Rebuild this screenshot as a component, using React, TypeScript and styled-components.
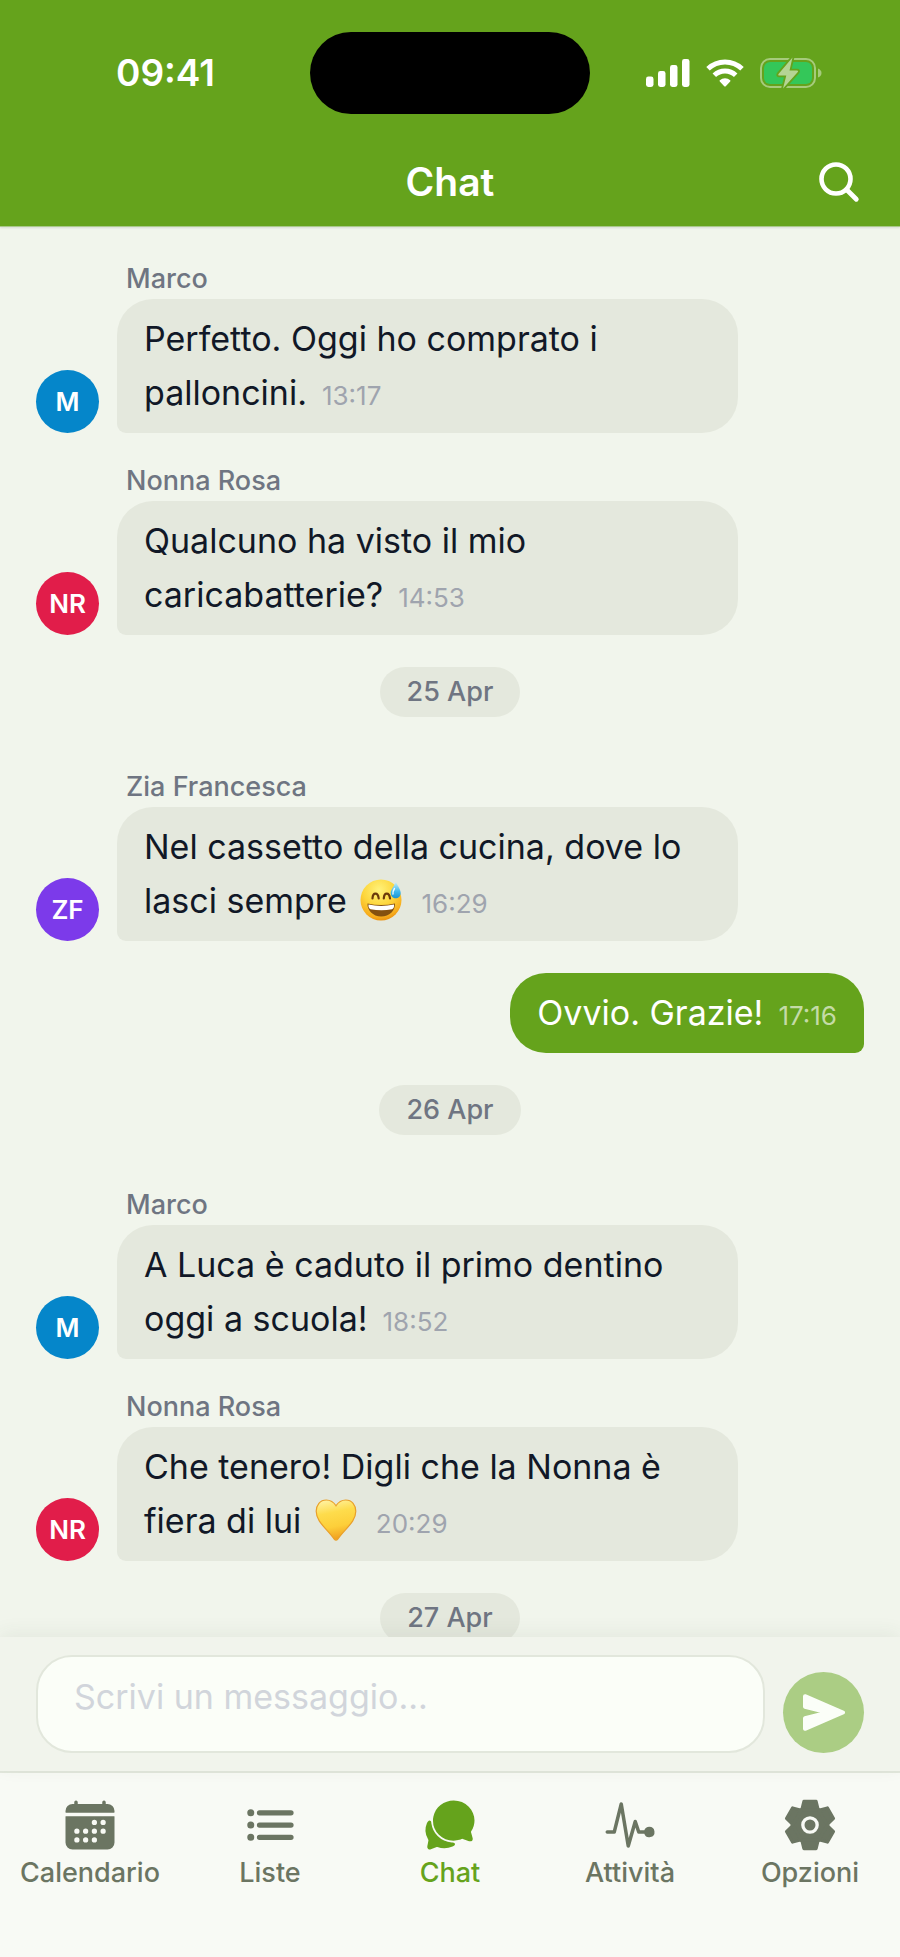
import React from "react";
import styled, { createGlobalStyle } from "styled-components";
import { IoCalendar, IoChatbubbles, IoList, IoPulse } from "react-icons/io5";

const color = {
  green: "#65a31c",
  page: "#f1f5ec",
  composer: "#f1f4ec",
  bubble: "#e4e8dd",
  nav: "#f8faf5",
  ink: "#111827",
  muted: "#6f7582",
  faint: "#9fa4ae",
  tab: "#6b7562",
};

const GlobalStyle = createGlobalStyle`
  *, *::before, *::after { box-sizing: border-box; }
  body {
    margin: 0;
    background: ${color.page};
    color: ${color.ink};
    font-family: Inter, "Liberation Sans", sans-serif;
  }
  button, textarea { font: inherit; border: 0; padding: 0; margin: 0; }
`;

const Screen = styled.div`
  display: flex;
  flex-direction: column;
  height: 100vh;
`;

const Header = styled.header`
  position: relative;
  z-index: 1;
  flex: none;
  background: ${color.green};
  border-bottom: 1px solid #a9c98a;
  box-shadow: 0 1px 2px rgba(0, 0, 0, 0.1);
`;

const StatusBar = styled.div`
  display: grid;
  grid-template-columns: 1fr 280px 1fr;
  align-items: center;
  height: 146px;
`;

const Clock = styled.time`
  padding-left: 116px;
  color: #fff;
  font-size: 37px;
  line-height: 44px;
  font-weight: 600;
`;

const Island = styled.div`
  height: 82px;
  border-radius: 41px;
  background: #000;
`;

const StatusIcons = styled.div`
  display: flex;
  align-items: center;
  justify-content: flex-end;
  gap: 16px;
  padding-right: 78px;

  svg {
    display: block;
  }
`;

const TitleBar = styled.div`
  display: grid;
  grid-template-columns: 1fr auto 1fr;
  align-items: center;
  height: 80px;
  padding: 0 40px 8px;
`;

const Title = styled.h1`
  grid-column: 2;
  margin: 0;
  color: #fff;
  font-size: 39px;
  line-height: 48px;
  font-weight: 600;
`;

const SearchButton = styled.button`
  justify-self: end;
  width: 42px;
  height: 42px;
  background: none;
  color: #fff;

  svg {
    display: block;
  }
`;

const Messages = styled.main`
  flex: 1;
  min-height: 0;
  overflow-y: auto;
  scrollbar-width: none;
  display: flex;
  flex-direction: column;
  gap: 32px;
  padding: 36px;
`;

const Row = styled.article<{ $own?: boolean }>`
  flex: none;
  display: flex;
  align-items: flex-end;
  justify-content: ${(p) => (p.$own ? "flex-end" : "flex-start")};
  gap: 18px;
`;

const Avatar = styled.div<{ $tone: string }>`
  flex: none;
  display: grid;
  place-items: center;
  width: 63px;
  height: 63px;
  border-radius: 50%;
  background: ${(p) => p.$tone};
  color: #fff;
  font-size: 26px;
  font-weight: 600;
`;

const Column = styled.div`
  max-width: 75%;
`;

const Sender = styled.div`
  height: 36px;
  padding-left: 9px;
  color: ${color.muted};
  font-size: 27px;
  line-height: 32px;
  font-weight: 500;
`;

const Bubble = styled.p<{ $own?: boolean }>`
  margin: 0;
  padding: 13px 27px;
  border-radius: ${(p) => (p.$own ? "36px 36px 9px 36px" : "36px 36px 36px 9px")};
  background: ${(p) => (p.$own ? color.green : color.bubble)};
  color: ${(p) => (p.$own ? "#fff" : color.ink)};
  font-size: 34px;
  line-height: 54px;
`;

const Sent = styled.time<{ $own?: boolean }>`
  margin-left: 15px;
  color: ${(p) => (p.$own ? "#c4dba7" : color.faint)};
  font-size: 26px;
  line-height: 32px;
`;

const EmojiArt = styled.svg`
  width: 42px;
  height: 42px;
  margin: 0 4px;
  vertical-align: -8px;
`;

const Day = styled.div`
  flex: none;
  align-self: center;
  height: 50px;
  margin-bottom: 22px;
  padding: 0 27px;
  border-radius: 25px;
  background: ${color.bubble};
  color: ${color.muted};
  font-size: 27px;
  line-height: 50px;
  font-weight: 500;

  &:last-child {
    margin-bottom: 0;
  }
`;

const Composer = styled.form`
  position: relative;
  flex: none;
  display: flex;
  align-items: flex-end;
  gap: 18px;
  padding: 18px 36px;
  background: ${color.composer};
  box-shadow: 0 -4px 18px rgba(60, 70, 50, 0.07);
`;

const Field = styled.textarea`
  flex: 1;
  min-width: 0;
  height: 98px;
  && {
    padding: 13px 36px;
    border: 2px solid #e2e7dc;
  }
  border-radius: 36px;
  outline: 0;
  resize: none;
  overflow: hidden;
  background: #fbfef8;
  color: ${color.ink};
  && {
    font-size: 34px;
    line-height: 54px;
  }

  &::placeholder {
    color: #d1d5db;
    opacity: 1;
  }
`;

const SendButton = styled.button`
  flex: none;
  display: grid;
  place-items: center;
  width: 81px;
  height: 81px;
  border-radius: 50%;
  background: #abcd84;
  color: #fbfef8;
`;

const TabBar = styled.nav`
  flex: none;
  display: grid;
  grid-template-columns: repeat(5, 1fr);
  padding: 24px 0 68px;
  border-top: 2px solid #e2e7dc;
  background: ${color.nav};
`;

const Tab = styled.a<{ $active?: boolean }>`
  display: flex;
  flex-direction: column;
  align-items: center;
  gap: 4px;
  color: ${(p) => (p.$active ? color.green : color.tab)};
  font-size: 27px;
  line-height: 32px;
  font-weight: 500;
  text-decoration: none;
`;

const SignalIcon = () => (
  <svg width="44" height="28" viewBox="0 0 44 28" fill="#fff" aria-hidden="true">
    <rect x="0" y="17.5" width="7.5" height="10.5" rx="2.4" />
    <rect x="12" y="12" width="7.5" height="16" rx="2.4" />
    <rect x="24" y="6" width="7.5" height="22" rx="2.4" />
    <rect x="36" y="0" width="7.5" height="28" rx="2.4" />
  </svg>
);

const WifiIcon = () => (
  <svg width="38" height="28" viewBox="0 0 38 28" aria-hidden="true">
    <g fill="none" stroke="#fff" strokeWidth="5">
      <path d="M2 9.7a24.6 24.6 0 0 1 34 0" />
      <path d="M8.3 16.2a15.4 15.4 0 0 1 21.4 0" />
    </g>
    <path d="M13.8 21.3a7.6 7.6 0 0 1 10.4 0q.6.6 0 1.2L20 27q-1 1-2 0l-4.2-4.5q-.6-.6 0-1.2z" fill="#fff" />
  </svg>
);

const BatteryIcon = () => (
  <svg width="62" height="32" viewBox="0 0 62 32" aria-hidden="true">
    <rect x="1" y="2" width="54" height="28" rx="9" fill="none" stroke="#a6cb7c" strokeWidth="2" />
    <path d="M58 11.5q3.500 1.500 3.500 4.500t-3.500 4.500z" fill="#a6cb7c" />
    <rect x="4" y="5" width="48" height="22" rx="6" fill="#34c759" />
    <path
      d="M32.500 0.500 18.500 17q-1 1.500.8 1.500h7L23 31.500 37.800 15q1-1.500-.8-1.500h-7.500z"
      fill="#b5d494"
      stroke={color.green}
      strokeWidth="3.600"
      strokeLinejoin="round"
      paintOrder="stroke"
    />
  </svg>
);

const SearchIcon = () => (
  <svg width="42" height="42" viewBox="0 0 42 42" fill="none" stroke="currentColor" aria-hidden="true">
    <circle cx="18" cy="18" r="14.5" strokeWidth="4.6" />
    <path d="m28.5 28.5 9.8 9.8" strokeWidth="4.8" strokeLinecap="round" />
  </svg>
);

const SendIcon = () => (
  <svg width="42" height="37" viewBox="0 0 42 37" fill="currentColor" aria-hidden="true">
    <path
      d="M2 2.200 40 18.500 2 34.800V24.200l23-5.700L2 12.800z"
      stroke="currentColor"
      strokeWidth="4"
      strokeLinejoin="round"
    />
  </svg>
);

const GearIcon = () => (
  <svg width="56" height="56" viewBox="-84 -84 168 168" fill="currentColor" aria-hidden="true">
    <mask id="gear-ring">
      <rect x="-84" y="-84" width="168" height="168" fill="#fff" />
      <circle r="21.5" fill="none" stroke="#000" strokeWidth="10" />
    </mask>
    <g mask="url(#gear-ring)">
      <circle r="58" />
      {[0, 60, 120, 180, 240, 300].map((angle) => (
        <path
          key={angle}
          d="M-25 -45-18.500-71h37L25-45z"
          stroke="currentColor"
          strokeWidth="9"
          strokeLinejoin="round"
          transform={`rotate(${angle})`}
        />
      ))}
    </g>
  </svg>
);

const GrinSweat = () => (
  <EmojiArt viewBox="0 0 42 42" role="img" aria-label="😅">
    <defs>
      <radialGradient id="face" cx="45%" cy="25%" r="78%">
        <stop offset="0" stopColor="#fff27a" />
        <stop offset="0.5" stopColor="#fdd63c" />
        <stop offset="0.85" stopColor="#f7ac1c" />
        <stop offset="1" stopColor="#e88a0c" />
      </radialGradient>
      <linearGradient id="drop" x1="0" y1="0" x2="0" y2="1">
        <stop offset="0" stopColor="#c9f0fd" />
        <stop offset="0.6" stopColor="#3db7ec" />
        <stop offset="1" stopColor="#1a93d3" />
      </linearGradient>
    </defs>
    <circle cx="21" cy="21" r="20.5" fill="url(#face)" />
    <path
      d="M12.500 19.500c.3-6.500 5.500-6.500 6.200 0M23.800 19.500c.3-6.500 5.500-6.500 6.200 0"
      fill="none"
      stroke="#6b3a0a"
      strokeWidth="2.2"
      strokeLinecap="round"
    />
    <path d="M7.500 24.500q13.500 3.200 27.500 0c.3 7-5.500 13-13.800 13S7 31 7.500 24.500z" fill="#85500f" />
    <path d="M8.500 25.500q12.500 2.800 25.500 0 .5 3.500-2 4.800-10.500 2-21.500 0-2.400-1.200-2-4.800z" fill="#fff" />
    <path d="M36 3c-2.500 4.500-5.300 8-5.300 11 0 7 10 7 10 0 0-3.200-2.700-6.500-4.700-11z" fill="url(#drop)" />
    <path d="M34.500 9.500q-2 3-1.500 5.500" stroke="#f2fcff" strokeWidth="1.4" strokeLinecap="round" fill="none" />
  </EmojiArt>
);

const YellowHeart = () => (
  <EmojiArt viewBox="0 0 42 42" role="img" aria-label="💛">
    <defs>
      <linearGradient id="heart" x1="0.4" y1="0" x2="0.6" y2="1">
        <stop offset="0" stopColor="#fff09a" />
        <stop offset="0.3" stopColor="#fedc4c" />
        <stop offset="0.65" stopColor="#fdcf3a" />
        <stop offset="1" stopColor="#ef9a1c" />
      </linearGradient>
    </defs>
    <path
      d="M21 6.800C18.500 2.800 15 1 11.300 1 5 1 1.200 6 1.200 12.300c0 10.700 10.500 17 18 27.800q1.800 2 3.600 0c7.500-10.800 18-17.100 18-27.800C40.800 6 37 1 30.700 1 27 1 23.500 2.800 21 6.800z"
      fill="url(#heart)"
      stroke="#e9a02a"
      strokeWidth="1.2"
    />
  </EmojiArt>
);

type Person = { name: string; initials: string; tone: string };

const marco: Person = { name: "Marco", initials: "M", tone: "#0586ca" };
const rosa: Person = { name: "Nonna Rosa", initials: "NR", tone: "#e11d4a" };
const zia: Person = { name: "Zia Francesca", initials: "ZF", tone: "#7c3aea" };

type Entry =
  | { kind: "day"; label: string }
  | { kind: "message"; from?: Person; body: React.ReactNode; time: string };

const entries: Entry[] = [
  { kind: "message", from: marco, body: "Perfetto. Oggi ho comprato i palloncini.", time: "13:17" },
  { kind: "message", from: rosa, body: "Qualcuno ha visto il mio caricabatterie?", time: "14:53" },
  { kind: "day", label: "25 Apr" },
  {
    kind: "message",
    from: zia,
    body: <>Nel cassetto della cucina, dove lo lasci sempre <GrinSweat /></>,
    time: "16:29",
  },
  { kind: "message", body: "Ovvio. Grazie!", time: "17:16" },
  { kind: "day", label: "26 Apr" },
  { kind: "message", from: marco, body: "A Luca è caduto il primo dentino oggi a scuola!", time: "18:52" },
  {
    kind: "message",
    from: rosa,
    body: <>Che tenero! Digli che la Nonna è fiera di lui <YellowHeart /></>,
    time: "20:29",
  },
  { kind: "day", label: "27 Apr" },
];

const tabs = [
  { label: "Calendario", icon: <IoCalendar size={56} aria-hidden="true" /> },
  { label: "Liste", icon: <IoList size={56} aria-hidden="true" /> },
  { label: "Chat", icon: <IoChatbubbles size={56} aria-hidden="true" />, active: true },
  { label: "Attività", icon: <IoPulse size={56} aria-hidden="true" /> },
  { label: "Opzioni", icon: <GearIcon /> },
];

export default function App() {
  return (
    <Screen>
      <GlobalStyle />
      <Header>
        <StatusBar>
          <Clock>09:41</Clock>
          <Island />
          <StatusIcons>
            <SignalIcon />
            <WifiIcon />
            <BatteryIcon />
          </StatusIcons>
        </StatusBar>
        <TitleBar>
          <Title>Chat</Title>
          <SearchButton type="button" aria-label="Cerca">
            <SearchIcon />
          </SearchButton>
        </TitleBar>
      </Header>

      <Messages>
        {entries.map((entry, i) => {
          if (entry.kind === "day") return <Day key={i}>{entry.label}</Day>;
          const own = !entry.from;
          return (
            <Row key={i} $own={own}>
              {entry.from && <Avatar $tone={entry.from.tone}>{entry.from.initials}</Avatar>}
              <Column>
                {entry.from && <Sender>{entry.from.name}</Sender>}
                <Bubble $own={own}>
                  {entry.body}
                  <Sent $own={own}>{entry.time}</Sent>
                </Bubble>
              </Column>
            </Row>
          );
        })}
      </Messages>

      <Composer onSubmit={(e) => e.preventDefault()}>
        <Field rows={1} aria-label="Messaggio" placeholder="Scrivi un messaggio..." />
        <SendButton type="submit" aria-label="Invia">
          <SendIcon />
        </SendButton>
      </Composer>

      <TabBar>
        {tabs.map(({ label, icon, active }) => (
          <Tab key={label} href="#" $active={active} aria-current={active ? "page" : undefined}>
            {icon}
            {label}
          </Tab>
        ))}
      </TabBar>
    </Screen>
  );
}
